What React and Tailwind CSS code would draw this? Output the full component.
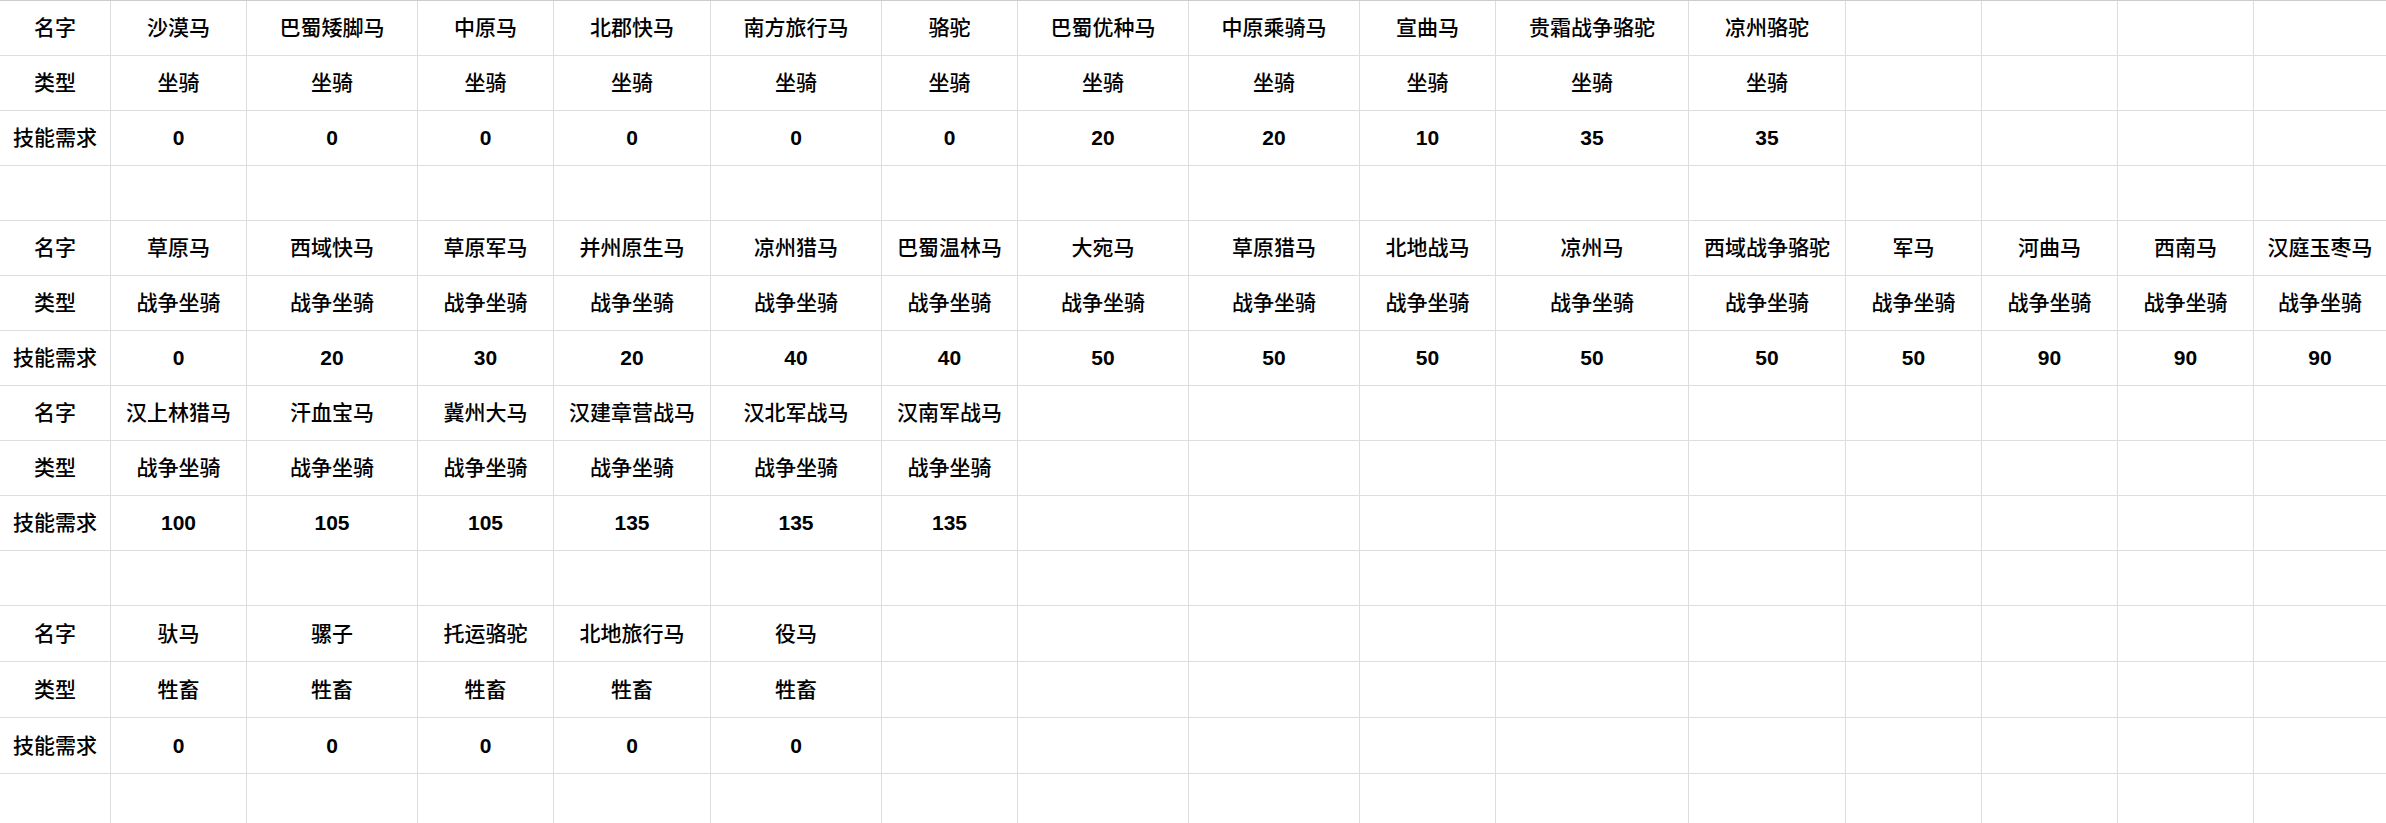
import React from "react";

const COLS = 16;

const groups = [
  {
    names: ["沙漠马", "巴蜀矮脚马", "中原马", "北郡快马", "南方旅行马", "骆驼", "巴蜀优种马", "中原乘骑马", "宣曲马", "贵霜战争骆驼", "凉州骆驼"],
    type: "坐骑",
    skills: ["0", "0", "0", "0", "0", "0", "20", "20", "10", "35", "35"],
    blankAfter: true,
  },
  {
    names: ["草原马", "西域快马", "草原军马", "并州原生马", "凉州猎马", "巴蜀温林马", "大宛马", "草原猎马", "北地战马", "凉州马", "西域战争骆驼", "军马", "河曲马", "西南马", "汉庭玉枣马"],
    type: "战争坐骑",
    skills: ["0", "20", "30", "20", "40", "40", "50", "50", "50", "50", "50", "50", "90", "90", "90"],
    blankAfter: false,
  },
  {
    names: ["汉上林猎马", "汗血宝马", "冀州大马", "汉建章营战马", "汉北军战马", "汉南军战马"],
    type: "战争坐骑",
    skills: ["100", "105", "105", "135", "135", "135"],
    blankAfter: true,
  },
  {
    names: ["驮马", "骡子", "托运骆驼", "北地旅行马", "役马"],
    type: "牲畜",
    skills: ["0", "0", "0", "0", "0"],
    blankAfter: true,
  },
];

function buildRows() {
  const rows = [];
  groups.forEach((g) => {
    const pad = (arr) => {
      const out = arr.slice();
      while (out.length < COLS - 1) out.push("");
      return out;
    };
    rows.push({ label: "名字", cells: pad(g.names), bold: false });
    rows.push({ label: "类型", cells: pad(g.names.map(() => g.type)), bold: false });
    rows.push({ label: "技能需求", cells: pad(g.skills), bold: true });
    if (g.blankAfter) rows.push({ label: "", cells: pad([]), bold: false });
  });
  return rows;
}

export default function App() {
  const rows = buildRows();
  return (
    <div className="w-[2386px] h-[823px] overflow-hidden bg-white">
      <div
        className="grid grid-cols-[111px_136px_171px_136px_157px_171px_136px_171px_171px_136px_193px_157px_136px_136px_136px_133px] w-[2387px] border-t border-[#cccccc] text-black text-[21px]"
        style={{ fontFamily: '"Liberation Sans", "Noto Sans CJK SC", sans-serif' }}
      >
        {rows.map((r, ri) => {
          const tall = ri >= 11 && ri <= 13;
          const h = tall ? "h-[56px]" : "h-[55px]";
          return (
            <React.Fragment key={ri}>
              <div className={`${h} border-r border-b border-[#dddddd] flex items-center justify-center font-medium whitespace-nowrap`}>
                {r.label}
              </div>
              {r.cells.map((c, ci) => (
                <div
                  key={ci}
                  className={`${h} border-r border-b border-[#dddddd] flex items-center justify-center whitespace-nowrap ${r.bold ? "font-bold" : "font-medium"}`}
                >
                  {c}
                </div>
              ))}
            </React.Fragment>
          );
        })}
      </div>
    </div>
  );
}
